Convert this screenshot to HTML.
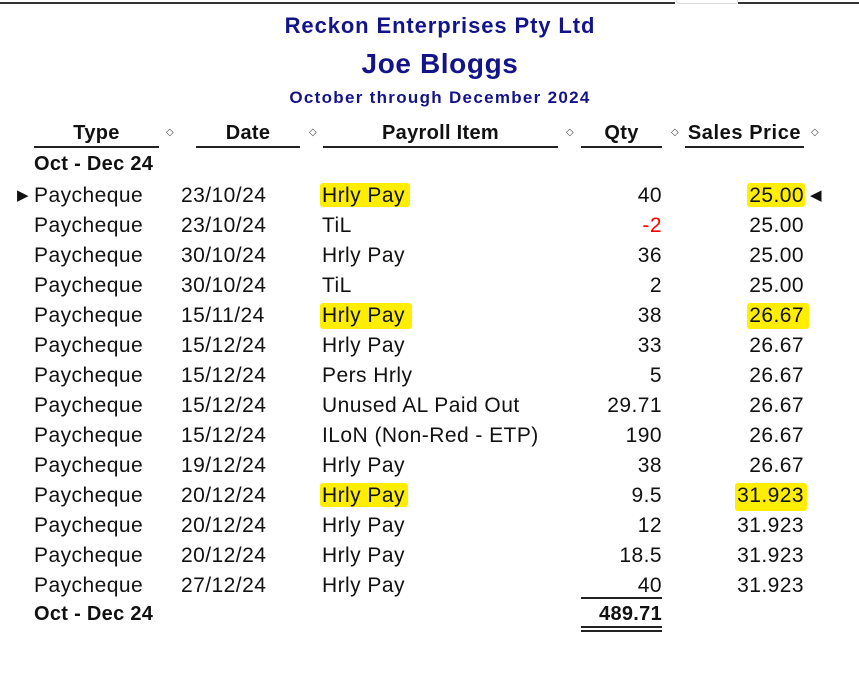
<!DOCTYPE html>
<html><head><meta charset="utf-8"><style>
body{margin:0;width:859px;height:673px;background:#fff;position:relative;overflow:hidden;font-family:"Liberation Sans",sans-serif;color:#111;}
.a{position:absolute;white-space:nowrap;line-height:24px;}
.t{font-size:21px;letter-spacing:0.45px;}
.r{text-align:right;}
.h{font-weight:bold;font-size:20px;letter-spacing:0.3px;}
.ul{position:absolute;height:2px;background:#222;}
.d{position:absolute;font-size:10px;color:#444;}
.hl{position:absolute;background:#ffee00;border-radius:3px;}
.nv{color:#14148a;font-weight:bold;text-align:center;left:0;width:880px;}
</style></head><body>
<div style="position:absolute;left:0;top:2px;width:675px;height:2px;background:#333"></div>
<div style="position:absolute;left:676px;top:0;width:60px;height:3px;border:1px solid #ddd;border-top:none;border-radius:0 0 3px 3px"></div>
<div style="position:absolute;left:738px;top:2px;width:121px;height:2px;background:#333"></div>
<div class="a nv" style="top:14px;font-size:22px;letter-spacing:0.9px">Reckon Enterprises Pty Ltd</div>
<div class="a nv" style="top:49px;font-size:28px;line-height:30px;letter-spacing:0.6px">Joe Bloggs</div>
<div class="a nv" style="top:86px;font-size:17px;letter-spacing:1.3px">October through December 2024</div>

<div class="a h" style="left:34px;width:125px;text-align:center;top:121px">Type</div>
<div class="a h" style="left:196px;width:104px;text-align:center;top:121px">Date</div>
<div class="a h" style="left:323px;width:235px;text-align:center;top:121px">Payroll Item</div>
<div class="a h" style="left:581px;width:81px;text-align:center;top:121px">Qty</div>
<div class="a h" style="left:685px;width:119px;text-align:center;top:121px;letter-spacing:0.6px">Sales Price</div>
<div class="ul" style="left:34px;width:125px;top:146px"></div>
<div class="ul" style="left:196px;width:104px;top:146px"></div>
<div class="ul" style="left:323px;width:235px;top:146px"></div>
<div class="ul" style="left:581px;width:81px;top:146px"></div>
<div class="ul" style="left:685px;width:119px;top:146px"></div>
<div class="d" style="left:166px;top:127px">◇</div>
<div class="d" style="left:309px;top:127px">◇</div>
<div class="d" style="left:566px;top:127px">◇</div>
<div class="d" style="left:671px;top:127px">◇</div>
<div class="d" style="left:811px;top:127px">◇</div>

<div class="a h" style="left:34px;top:152px">Oct - Dec 24</div>

<div class="hl" style="left:320px;top:183px;width:90px;height:24px"></div>
<div class="hl" style="left:747px;top:183px;width:58px;height:24px"></div>
<div class="hl" style="left:320px;top:303px;width:92px;height:26px"></div>
<div class="hl" style="left:747px;top:303px;width:62px;height:26px"></div>
<div class="hl" style="left:320px;top:483px;width:88px;height:24px"></div>
<div class="hl" style="left:735px;top:483px;width:72px;height:28px"></div>

<div class="a" style="left:17px;top:184px;font-size:15px">▶</div>
<div class="a" style="left:810px;top:184px;font-size:15px">◀</div>

<div id="rows"></div>
<div class="ul" style="left:581px;width:81px;top:597px;height:1.5px"></div>
<div class="a h" style="left:34px;top:602px">Oct - Dec 24</div>
<div class="a h r" style="left:562px;width:100px;top:602px">489.71</div>
<div class="ul" style="left:581px;width:81px;top:626px;height:1.5px"></div>
<div class="ul" style="left:581px;width:81px;top:630px;height:1.5px"></div>
<script>
var d=[["23/10/24","Hrly Pay","40","25.00"],["23/10/24","TiL","-2","25.00"],["30/10/24","Hrly Pay","36","25.00"],["30/10/24","TiL","2","25.00"],["15/11/24","Hrly Pay","38","26.67"],["15/12/24","Hrly Pay","33","26.67"],["15/12/24","Pers Hrly","5","26.67"],["15/12/24","Unused AL Paid Out","29.71","26.67"],["15/12/24","ILoN (Non-Red - ETP)","190","26.67"],["19/12/24","Hrly Pay","38","26.67"],["20/12/24","Hrly Pay","9.5","31.923"],["20/12/24","Hrly Pay","12","31.923"],["20/12/24","Hrly Pay","18.5","31.923"],["27/12/24","Hrly Pay","40","31.923"]];
var h="";d.forEach(function(r,i){var y=184+i*30;
h+='<div class="a t" style="left:34px;top:'+y+'px">Paycheque</div><div class="a t" style="left:181px;top:'+y+'px">'+r[0]+'</div><div class="a t" style="left:322px;top:'+y+'px">'+r[1]+'</div><div class="a t r" style="left:562px;width:100px;top:'+y+'px;'+(r[2][0]=="-"?"color:#f00":"")+'">'+r[2]+'</div><div class="a t r" style="left:704px;width:100px;top:'+y+'px">'+r[3]+'</div>';});
document.getElementById("rows").innerHTML=h;
</script>
</body></html>
